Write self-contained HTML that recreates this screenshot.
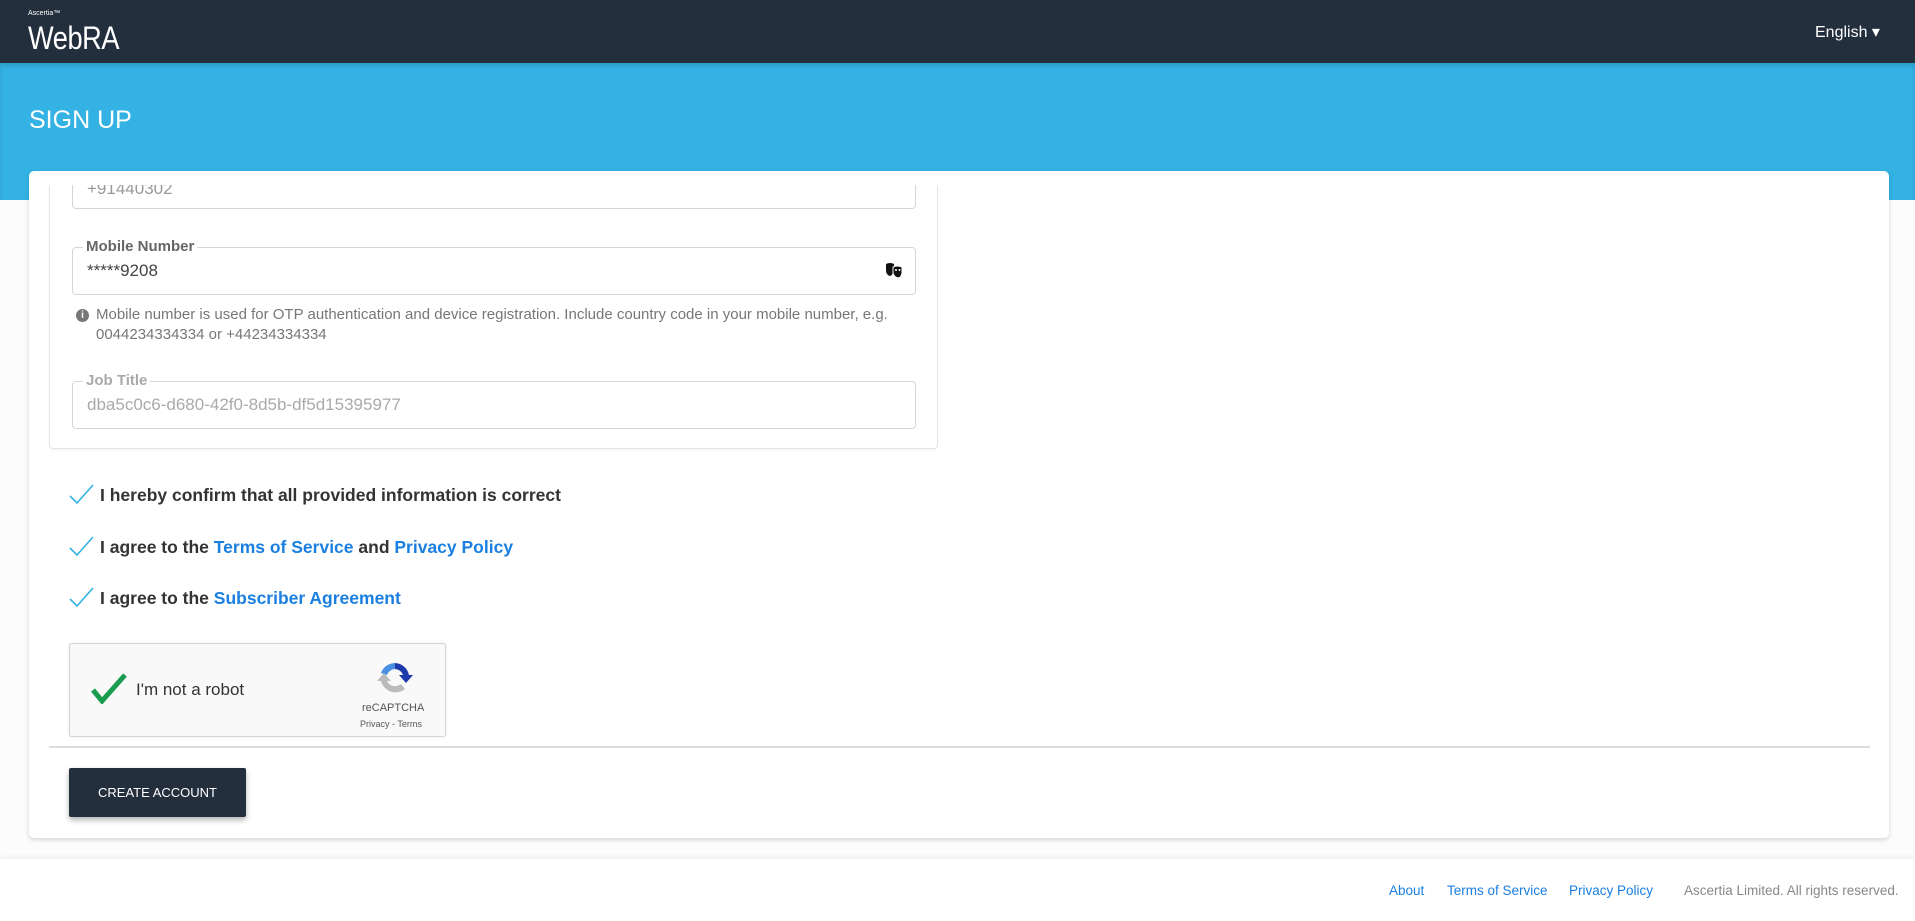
<!DOCTYPE html>
<html><head><meta charset="utf-8"><style>
*{box-sizing:border-box;margin:0;padding:0}
body{width:1915px;height:921px;overflow:hidden;background:#fcfcfc;font-family:"Liberation Sans",Arial,sans-serif;position:relative}
.hdr{position:absolute;left:0;top:0;width:1915px;height:63px;background:#242f3e}
.asc{position:absolute;left:28px;top:10px;color:#fff;font-size:7px}
.logo{position:absolute;left:28px;top:20px;color:#fff;font-size:32px;transform:scaleX(.85);transform-origin:left;letter-spacing:-0.5px}
.lang{position:absolute;left:1815px;top:22px;color:#fff;font-size:16px}
.ban{position:absolute;left:0;top:63px;width:1915px;height:137px;background:#33b2e3;box-shadow:inset 0 3px 4px rgba(0,0,0,.12)}
.ban h1{position:absolute;left:29px;top:43px;color:#fff;font-weight:normal;font-size:25px}
.card{position:absolute;left:29px;top:171px;width:1860px;height:667px;background:#fff;border-radius:5px;box-shadow:0 2px 5px rgba(0,0,0,.15);overflow:hidden}
.clip{position:absolute;left:0;top:14px;width:1860px;height:300px;overflow:hidden}
.grp{position:absolute;left:20px;top:-60px;width:889px;height:324px;border:1px solid #e6e6e6;border-radius:4px;box-shadow:0 1px 2px rgba(0,0,0,.05)}
.box{position:absolute;left:22px;width:844px;height:48px;border:1px solid #d6d6d6;border-radius:4px}
.lg{position:absolute;left:10px;top:-11px;background:#fff;padding:0 3px;font-weight:bold;font-size:15px;color:#666;line-height:20px}
.val{position:absolute;left:14px;top:13px;font-size:17px;color:#444}
.help{position:absolute;left:26px;font-size:15px;color:#777;line-height:20px;padding-left:20px;width:860px}
.help i{position:absolute;left:0;top:4px;width:13px;height:13px;border-radius:50%;background:#777;color:#fff;font-size:10px;font-style:normal;text-align:center;line-height:13px;font-weight:bold}
.chk{position:absolute;left:40px;font-size:17.5px;font-weight:bold;color:#333}
.chk svg{position:absolute;left:0;top:-2px}
.chk span{margin-left:31px}
a{color:#1a7fe0;text-decoration:none}
.rc{position:absolute;left:40px;top:472px;width:377px;height:94px;background:#f9f9f9;border:1px solid #d3d3d3;border-radius:3px;box-shadow:0 0 3px rgba(0,0,0,.08)}
.hr{position:absolute;left:20px;top:575px;width:1821px;height:2px;background:#dedede}
.btn{position:absolute;left:40px;top:597px;width:177px;height:49px;background:#242f3e;color:#fff;font-size:13px;text-align:center;line-height:49px;border-radius:2px;box-shadow:0 3px 6px rgba(0,0,0,.3)}
.foot{position:absolute;left:0;top:859px;width:1915px;height:62px;background:#fff;box-shadow:0 -2px 4px rgba(0,0,0,.06);font-size:13.5px}
.foot span{position:absolute;top:24px}
</style></head><body>
<div class="hdr"><div class="asc">Ascertia™</div><div class="logo">WebRA</div><div class="lang">English ▾</div></div>
<div class="ban"><h1>SIGN UP</h1></div>
<div class="card">
 <div class="clip"><div class="grp">
  <div class="box" style="top:32px;height:51px"><div class="val" style="top:20px;color:#999">+91440302</div></div>
  <div class="box" style="top:121px;height:48px"><div class="lg">Mobile Number</div><div class="val">*****9208</div>
   <svg style="position:absolute;right:12px;top:14px" width="18" height="16" viewBox="0 0 18 16"><path d="M1 2q4-2 8 0v6q-1 5-4 6-4-1-4-6z" fill="#111"/><path d="M8 5q4-2 9 0v6q-1 5-4 5-4-1-5-5z" fill="#111" stroke="#fff" stroke-width="1"/><circle cx="11" cy="8" r="1" fill="#fff"/><circle cx="14.5" cy="8" r="1" fill="#fff"/></svg></div>
  <div class="help" style="top:179px"><i>i</i>Mobile number is used for OTP authentication and device registration. Include country code in your mobile number, e.g.<br>0044234334334 or +44234334334</div>
  <div class="box" style="top:255px;height:48px"><div class="lg" style="color:#aaa">Job Title</div><div class="val" style="color:#aaa">dba5c0c6-d680-42f0-8d5b-df5d15395977</div></div>
 </div></div>
 <div class="chk" style="top:314px"><svg width="26" height="22"><path d="M1 13l7 7L24 2" fill="none" stroke="#33b2e3" stroke-width="1.6"/></svg><span>I hereby confirm that all provided information is correct</span></div>
 <div class="chk" style="top:366px"><svg width="26" height="22"><path d="M1 13l7 7L24 2" fill="none" stroke="#33b2e3" stroke-width="1.6"/></svg><span>I agree to the <a>Terms of Service</a> and <a>Privacy Policy</a></span></div>
 <div class="chk" style="top:417px"><svg width="26" height="22"><path d="M1 13l7 7L24 2" fill="none" stroke="#33b2e3" stroke-width="1.6"/></svg><span>I agree to the <a>Subscriber Agreement</a></span></div>
 <div class="rc">
  <svg style="position:absolute;left:20px;top:28px" width="38" height="32"><path d="M3 18l9 11L35 3" fill="none" stroke="#1a9c4f" stroke-width="5"/></svg>
  <div style="position:absolute;left:66px;top:36px;font-size:17px;color:#333">I'm not a robot</div>
  <svg style="position:absolute;left:305px;top:14px" width="40" height="40" viewBox="0 0 40 40"><path d="M20 5a15 15 0 0 0-14 10l6 2a9 9 0 0 1 8-6z" fill="#4a90e2"/><path d="M20 5a15 15 0 0 1 14 12h4l-7 8-7-8h4a9 9 0 0 0-8-6z" fill="#1c3aa9"/><path d="M6 23a15 15 0 0 0 24 8l-4-5a9 9 0 0 1-14-3h4l-7-8-7 8z" fill="#bbb"/></svg>
  <div style="position:absolute;left:292px;top:58px;font-size:11px;color:#555">reCAPTCHA</div>
  <div style="position:absolute;left:290px;top:75px;font-size:9px;color:#555">Privacy - Terms</div>
 </div>
 <div class="hr"></div>
 <div class="btn">CREATE ACCOUNT</div>
</div>
<div class="foot">
 <span style="left:1389px"><a>About</a></span>
 <span style="left:1447px"><a>Terms of Service</a></span>
 <span style="left:1569px"><a>Privacy Policy</a></span>
 <span style="left:1684px;color:#888">Ascertia Limited. All rights reserved.</span>
</div>
</body></html>
